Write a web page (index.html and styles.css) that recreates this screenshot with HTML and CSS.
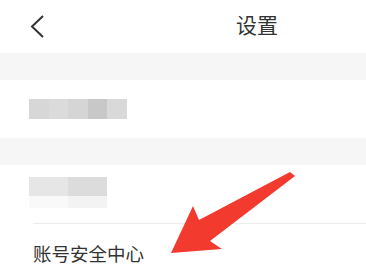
FILE: index.html
```html
<!DOCTYPE html>
<html lang="zh">
<head>
  <meta charset="UTF-8">
  <title>设置</title>
  <link rel="stylesheet" href="styles.css">
</head>
<body>

<!-- Top bar -->
<div class="topbar">
  <svg class="back" width="16" height="26" viewBox="0 0 16 26">
    <polyline points="13,2 2,12.5 13,23" fill="none" stroke="#333" stroke-width="2"/>
  </svg>
  <div class="title">设置</div>
</div>

<div class="gap"></div>

<!-- Blurred account row -->
<div class="row">
  <div class="mosaic">
    <span class="m1"></span><span class="m2"></span><span class="m3"></span><span class="m4"></span><span class="m5"></span>
  </div>
</div>

<div class="gap"></div>

<!-- Blurred second row -->
<div class="row row-two">
  <div class="mosaic">
    <span class="w2 m6"></span><span class="w2 m7"></span>
  </div>
  <div class="mosaic faint">
    <span class="w2 m8"></span><span class="w2 m9"></span>
  </div>
</div>
<div class="divider"></div>

<div class="row item">
  <div class="label">账号安全中心</div>
</div>

<!-- Red annotation arrow -->
<svg class="arrow" width="366" height="269" viewBox="0 0 366 269">
  <polygon points="290,172 295,176 210,241 222,249 171,253 193,206 199,220" fill="#f23a2f"/>
</svg>

</body>
</html>
```

FILE: styles.css
```css
body {
  margin: 0;
  padding: 0;
  font-family: "Noto Sans CJK SC", "Noto Sans", sans-serif;
  background-color: #fff;
  color: #333;
  overflow: hidden;
  position: relative;
}

.topbar {
  height: 53px;
  display: flex;
  align-items: center;
  padding-left: 30px;
}

.back {
  display: block;
}

.title {
  font-size: 21px;
  margin-left: 190px;
  margin-top: -5px;
  color: #333;
}

.gap {
  height: 27px;
  background-color: #f6f6f6;
}

.row {
  height: 58px;
  display: flex;
  flex-direction: column;
  justify-content: center;
  padding-left: 29px;
}

.row-two {
  justify-content: flex-start;
  padding-top: 12px;
  height: 46px;
}

.divider {
  height: 1px;
  margin-left: 33px;
  background-color: #ececec;
}

.mosaic {
  display: flex;
}

.mosaic span {
  display: block;
  width: 19.6px;
  height: 20px;
}

.mosaic .w2 {
  width: 39px;
  height: 19px;
}

.faint .w2 {
  height: 12px;
}

.m1 { background-color: #d7d7d7; }
.m2 { background-color: #dbdbdb; }
.m3 { background-color: #d5d5d5; }
.m4 { background-color: #c8c8c8; }
.m5 { background-color: #d9d9d9; }
.m6 { background-color: #e6e6e6; }
.m7 { background-color: #dcdcdc; }
.m8 { background-color: #f9f9f9; }
.m9 { background-color: #f3f3f3; }

.item {
  height: 45px;
  padding-left: 33px;
  padding-top: 4px;
  justify-content: flex-start;
}

.label {
  font-size: 18.5px;
  color: #333;
  margin-top: 12px;
}

.arrow {
  position: absolute;
  top: 0;
  left: 0;
}
```
